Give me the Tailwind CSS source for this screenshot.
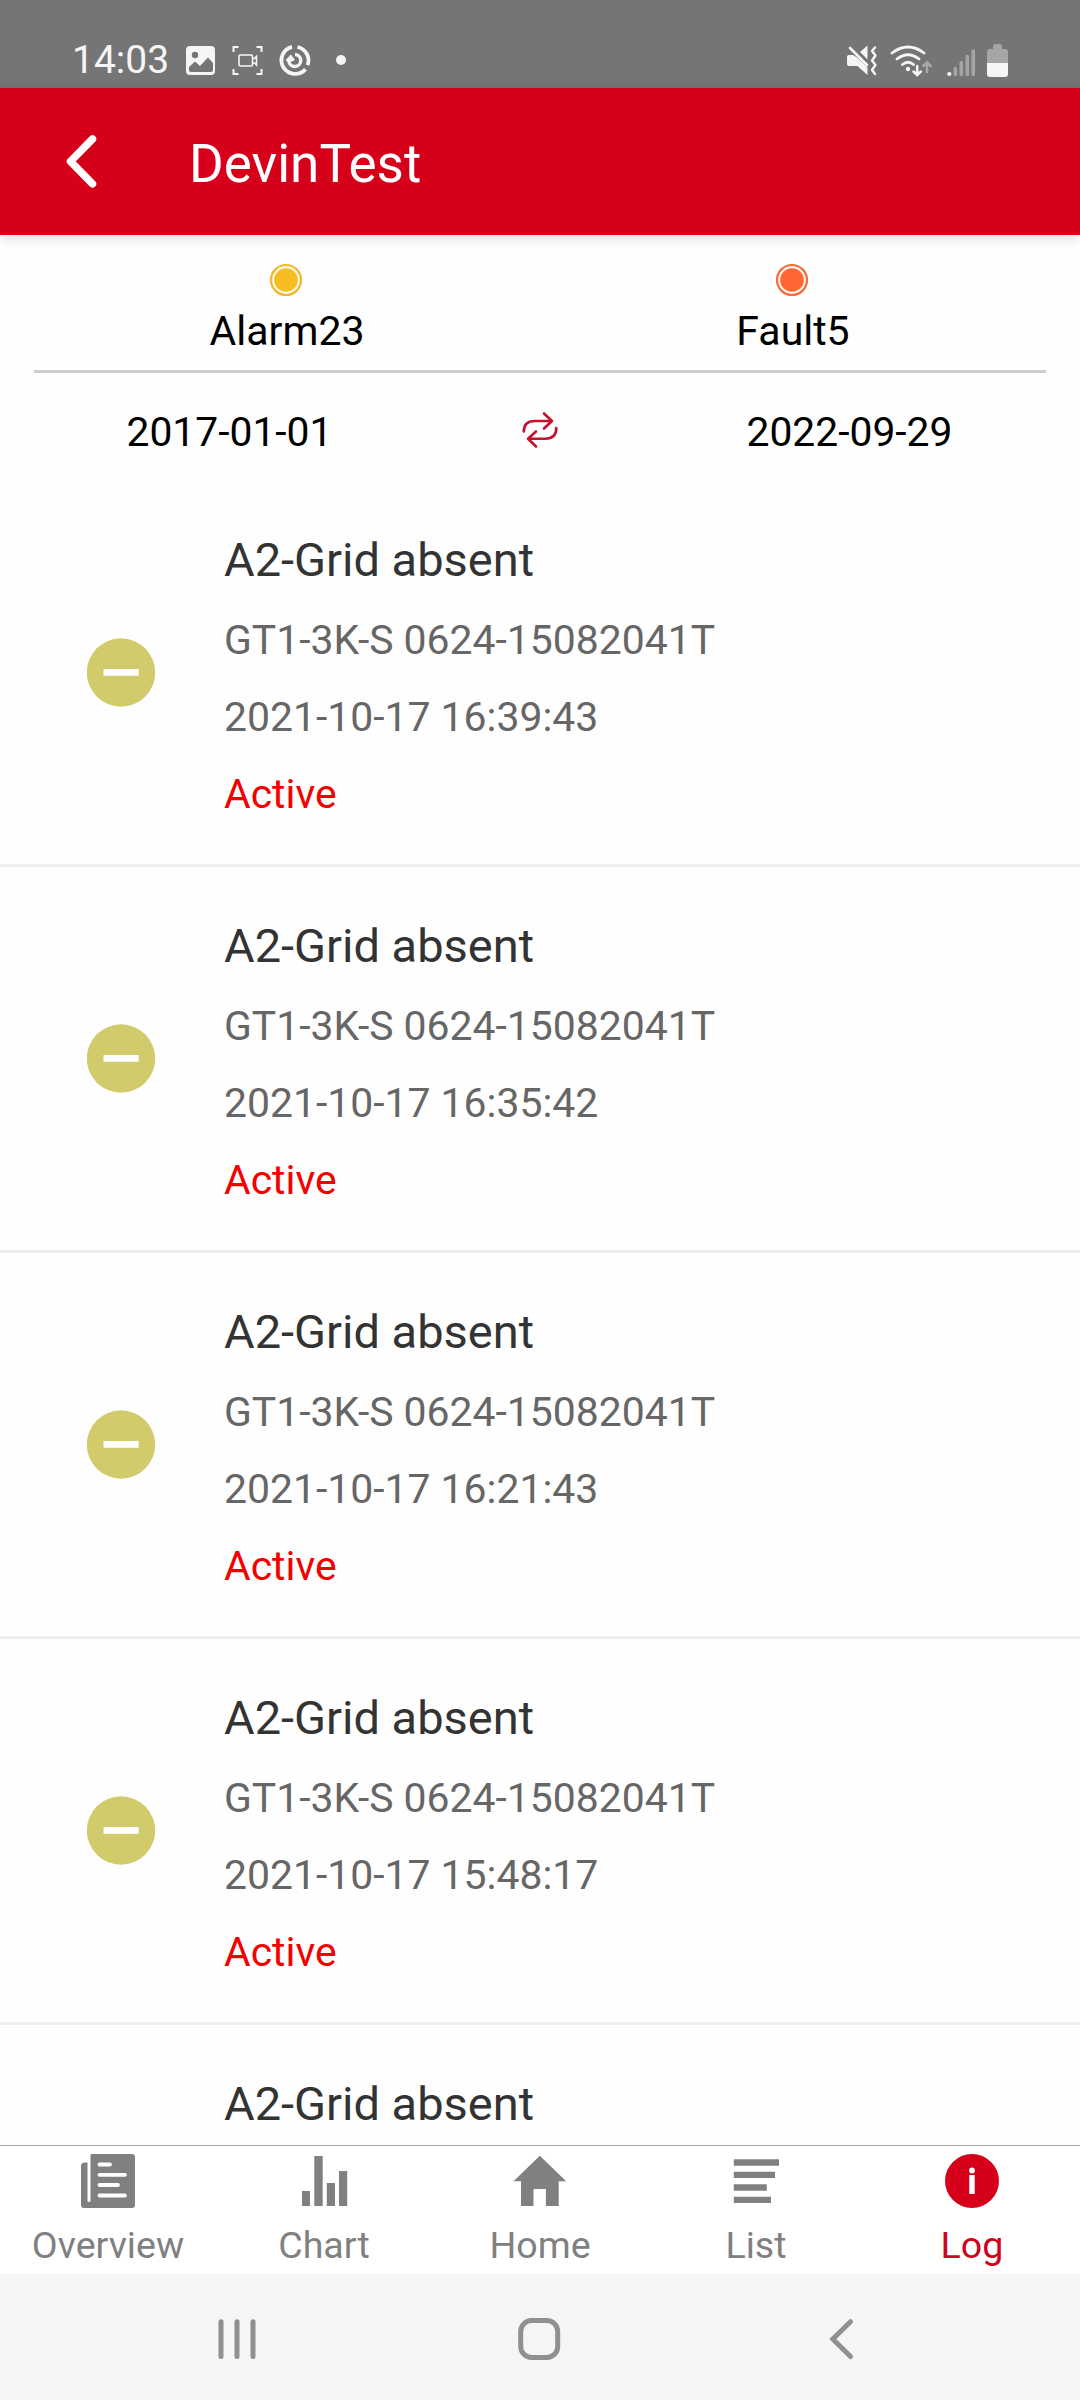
<!DOCTYPE html>
<html lang="en">
<head>
<meta charset="utf-8">
<title>DevinTest</title>
<script src="https://cdn.jsdelivr.net/npm/@tailwindcss/browser@4"></script>
</head>
<body class="bg-white">
<div class="flex h-[2400px] w-[1080px] flex-col overflow-hidden bg-[#fefefe] font-['Roboto',sans-serif]">

  <!-- Status bar -->
  <div class="flex h-[88px] shrink-0 items-end justify-between bg-[#757575] pr-[66px] pl-[72px] text-[#f5f5f5]">
    <div class="flex items-end">
      <span class="w-[108px] pb-[3px] text-[39px] leading-[50px]">14:03</span>
      <svg class="h-[48px] w-[180px]" viewBox="180 40 180 48" fill="none">
        <rect x="186" y="46" width="29" height="29" rx="4" fill="currentColor"/>
        <circle cx="195" cy="55" r="3.2" fill="#757575"/>
        <path d="M189 67l6-5.5 5 4.500 8-8.500 5 5.500v7q0 2-2 2h-20q-2 0-2-2z" fill="#757575"/>
        <path d="M233.500 52v-5h5M256.500 47h5v5M261.500 69v5h-5M238.500 74h-5v-5" stroke="currentColor" stroke-width="2"/>
        <rect x="239" y="55" width="13.500" height="11" rx="1.500" stroke="currentColor" stroke-width="1.600"/>
        <path d="M252.500 58.500h2l2-2v8.500l-2-2h-2" stroke="currentColor" stroke-width="1.600"/>
        <path d="M292 46.900A13.700 13.700 0 1 0 305.500 69.200" stroke="currentColor" stroke-width="3.800"/>
        <path d="M297.500 47A13.700 13.700 0 0 1 307.600 65.200" stroke="currentColor" stroke-width="3.800"/>
        <path d="M295 54.500a6 6 0 1 1-6.200 6.500" stroke="currentColor" stroke-width="3.400"/>
        <path d="M285.500 60l5.500-5.500 4 5.500-6 3z" fill="currentColor"/>
        <circle cx="341" cy="60" r="5" fill="currentColor"/>
      </svg>
    </div>
    <svg class="h-[48px] w-[174px]" viewBox="840 40 174 48" fill="none" stroke-linecap="round">
      <path d="M860 52l7.500-6.500v14zM849 55h4l14.500 9v11l-10-9h-8.500q-2 0-2-2v-7q0-2 2-2z" fill="currentColor"/>
      <path d="M853 51.500L869 67" stroke="#757575" stroke-width="2.500"/>
      <path d="M850 48l17 17" stroke="currentColor" stroke-width="2.600"/>
      <path d="M875 47.500l-3 3.500 3.500 4.500-3.500 5 3.500 4.500-3.500 5 3 4" stroke="currentColor" stroke-width="2.400" stroke-linejoin="round"/>
      <path d="M892 53q16-12 32 0M897 59q11-8.500 22 0M902.500 64.500q5.500-4.500 11 0" stroke="currentColor" stroke-width="2.800"/>
      <circle cx="908" cy="69" r="2.200" fill="currentColor"/>
      <path d="M917.200 66v8.500M913.500 71.500l3.700 3.500 3.700-3.500" stroke="currentColor" stroke-width="2.500"/>
      <path d="M927 72v-8.500M923.300 66l3.700-3.500 3.700 3.500" stroke="#a8a8a8" stroke-width="2.500"/>
      <circle cx="949.300" cy="74" r="2.100" fill="currentColor"/>
      <path d="M955.300 68.500v6M961.300 62.500v12M967.300 56.500v18M973.200 51v23.500" stroke="#a5a5a5" stroke-width="3.600"/>
      <path d="M987 63v-11q0-3 3-3h3v-3q0-2 2-2h5q2 0 2 2v3h3q3 0 3 3v11z" fill="#a5a5a5"/>
      <path d="M987 63h21v11q0 3-3 3h-15q-3 0-3-3z" fill="currentColor"/>
    </svg>
  </div>

  <!-- App header -->
  <header class="z-10 flex h-[147px] shrink-0 items-center bg-[#d6001b] text-white shadow-[0_2px_12px_rgba(0,0,0,0.16)]">
    <svg class="ml-[60px] h-[60px] w-[130px]" viewBox="60 131.500 130 60" fill="none">
      <path d="M92.500 138.500L70.500 160.800 92.500 183.300" stroke="currentColor" stroke-width="7.500" stroke-linecap="round" stroke-linejoin="round"/>
    </svg>
    <h1 class="-ml-[1px] pt-[5px] text-[53px] leading-[62px]">DevinTest</h1>
  </header>

  <!-- Summary -->
  <section class="mx-[34px] flex h-[138px] shrink-0 border-b-[3px] border-[#ccc] text-[41px] leading-[48px] text-black">
    <div class="flex flex-1 flex-col items-center pt-[28px]">
      <svg class="mr-[2px] size-[34px]" viewBox="0 0 34 34"><circle cx="17" cy="17" r="15" fill="#fffbe8" stroke="#efb62f" stroke-width="2.200"/><circle cx="17" cy="17" r="11.800" fill="#f7bc21"/></svg>
      <span class="mt-[10px]">Alarm23</span>
    </div>
    <div class="flex flex-1 flex-col items-center pt-[28px]">
      <svg class="mr-[2px] size-[34px]" viewBox="0 0 34 34"><circle cx="17" cy="17" r="15" fill="#fff4ee" stroke="#f26c3d" stroke-width="2.200"/><circle cx="17" cy="17" r="11.800" fill="#ff6633"/></svg>
      <span class="mt-[10px]">Fault5</span>
    </div>
  </section>

  <!-- Date range -->
  <section class="flex h-[108px] shrink-0 items-start pt-[35px] text-[40.8px] leading-[48px] text-black">
    <span class="w-[458px] pl-px text-center">2017-01-01</span>
    <svg class="h-[48px] w-[164px]" viewBox="458 408 164 48" fill="none" stroke="#c8102e" stroke-width="2.600" stroke-linecap="round" stroke-linejoin="round">
      <path d="M523.800 431.500q0-10.500 11-10.500h16.500M544 413.500l8 7.500-8 7.500M556.300 428q0 10.700-11 10.700h-17M536 431.500l-8 7.200 8 7.800"/>
    </svg>
    <span class="w-[458px] pr-[3px] text-center">2022-09-29</span>
  </section>

  <!-- Event list -->
  <main id="events" class="min-h-0 flex-1 overflow-hidden"></main>

  <!-- Tabs -->
  <nav class="grid h-[129px] shrink-0 grid-cols-5 border-t border-[#a3a3a3] bg-white text-center text-[37.6px] leading-[44px] text-[#808080]">
    <div class="flex flex-col items-center pt-[8px]">
      <svg class="h-[54px] w-[54px]" viewBox="81 2154 54 54" fill="currentColor">
        <path d="M94 2154h38q3 0 3 3v48q0 3-3 3h-48q-3 0-3-3v-39q0-3.500 4-3.500h2.500v38q0 1.500 1.500 1.500t1.500-1.500v-44.500q0-3 3-3z"/>
        <path d="M99.500 2164.500h10.500M99.500 2174.800h25.500M99.500 2185h18.500M99.500 2195.500h25.500" stroke="#fff" stroke-width="3.800" stroke-linecap="round"/>
      </svg>
      <span class="mt-[15px]">Overview</span>
    </div>
    <div class="flex flex-col items-center pt-[8px]">
      <svg class="h-[54px] w-[54px]" viewBox="297 2154 54 54" fill="currentColor"><path d="M302 2191h8v15h-8zM314.300 2156h8.400v50h-8.400zM326.800 2183h8.200v23h-8.200zM339 2171h8.200v35h-8.200z"/></svg>
      <span class="mt-[15px]">Chart</span>
    </div>
    <div class="flex flex-col items-center pt-[8px]">
      <svg class="h-[54px] w-[54px]" viewBox="513 2154 54 54" fill="currentColor"><path d="M539.800 2155.700l26.400 25.500h-7.500v24.800h-12.800v-17h-12.400v17h-12.500v-24.800h-7.500z"/></svg>
      <span class="mt-[15px]">Home</span>
    </div>
    <div class="flex flex-col items-center pt-[8px]">
      <svg class="h-[54px] w-[54px]" viewBox="729 2154 54 54" fill="currentColor"><path d="M733.800 2159.300h45.200v6.400h-45.200zM733.800 2171.700h41.200v6.400h-41.200zM733.800 2184.300h33v6.400h-33zM733.800 2196.700h37.200v6.400h-37.200z"/></svg>
      <span class="mt-[15px]">List</span>
    </div>
    <div class="flex flex-col items-center pt-[8px] text-[#d0021b]">
      <svg class="h-[54px] w-[54px]" viewBox="945 2154 54 54"><circle cx="972" cy="2181" r="27" fill="#d6001b"/><circle cx="972" cy="2170.500" r="2.900" fill="#fff"/><path d="M969.300 2175h5.400v19h-5.400z" fill="#fff"/></svg>
      <span class="mt-[15px]">Log</span>
    </div>
  </nav>

  <!-- System navigation -->
  <div class="flex h-[126px] shrink-0 items-center bg-[#f5f5f5]">
    <svg class="h-[60px] w-full" viewBox="0 2307 1080 60" fill="none" stroke="#909090" stroke-width="5" stroke-linecap="round">
      <path d="M221 2321.700v34.800M237 2321.700v34.800M253 2321.700v34.800"/>
      <rect x="520.700" y="2320.500" width="37" height="37" rx="11"/>
      <path d="M850.500 2321.700L832.800 2339l17.700 17.500"/>
    </svg>
  </div>
</div>

<template id="event">
  <article class="flex h-[386px] items-center border-b-[3px] border-[#eee]">
    <svg class="ml-[87px] h-[69px] w-[68px] shrink-0" viewBox="0 0 68 69"><circle cx="34" cy="34.500" r="34.200" fill="#d1cb6b"/><path d="M16.500 31h35.200v6.800h-35.200z" fill="#fff"/></svg>
    <div class="ml-[69px] flex flex-col self-start pt-[51px] text-[40.9px] leading-[77px] text-[#666]">
      <h2 class="mb-[14px] text-[47px] leading-[56px] text-[#333]">A2-Grid absent</h2>
      <p>GT1-3K-S 0624-15082041T</p>
      <p data-time></p>
      <p class="text-[#f30000]">Active</p>
    </div>
  </article>
</template>
<script>
  const list = document.getElementById('events');
  const tpl = document.getElementById('event');
  for (const t of ['16:39:43', '16:35:42', '16:21:43', '15:48:17', null]) {
    const row = tpl.content.cloneNode(true);
    if (t) row.querySelector('[data-time]').textContent = '2021-10-17 ' + t;
    else row.querySelectorAll('p').forEach(el => el.remove());
    list.appendChild(row);
  }
</script>
</body>
</html>
